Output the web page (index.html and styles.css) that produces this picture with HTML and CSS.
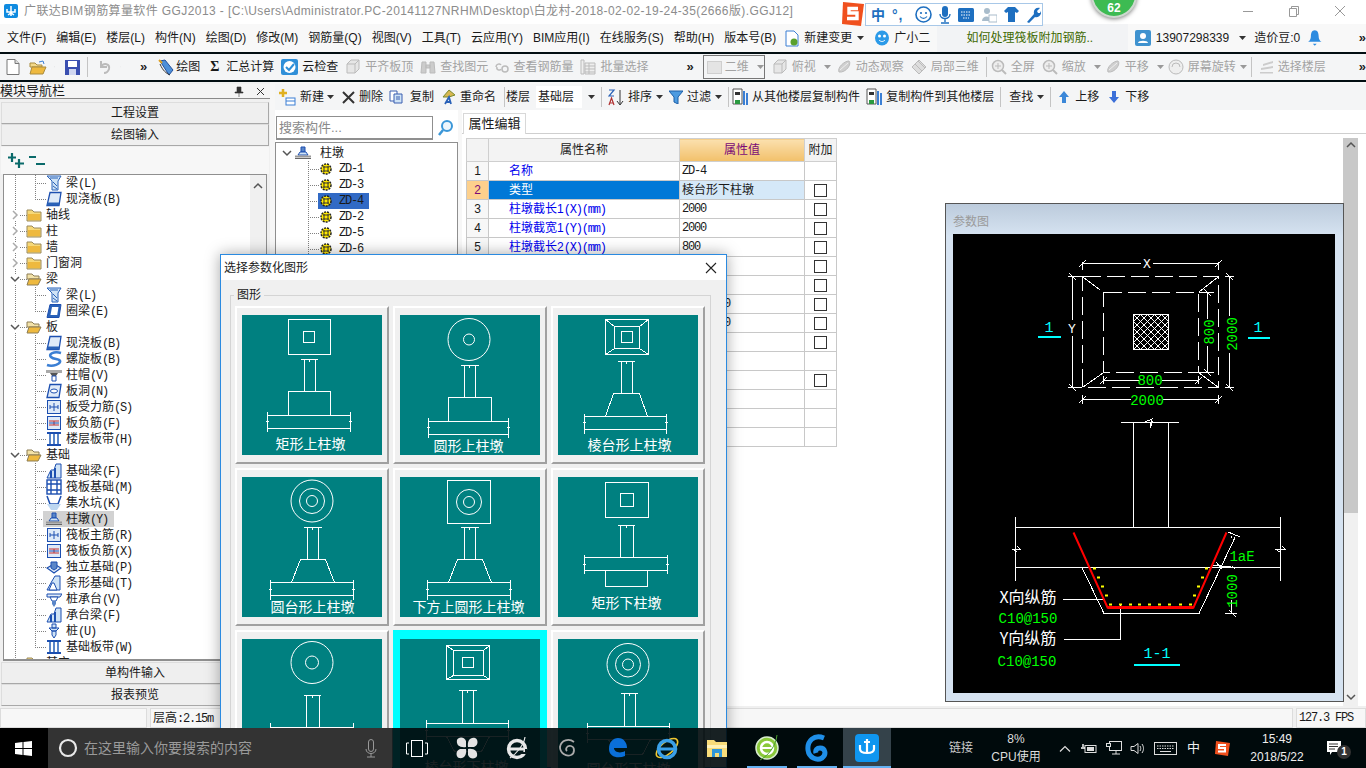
FILE: index.html
```html
<!DOCTYPE html>
<html lang="zh">
<head>
<meta charset="utf-8">
<title>广联达BIM钢筋算量软件 GGJ2013</title>
<link rel="stylesheet" href="styles.css">
</head>
<body>
<svg class="defs" width="0" height="0">
  <defs>
    <symbol id="fc" viewBox="0 0 16 14"><path d="M1 2h5l2 2h7v9H1z" fill="#f6d878" stroke="#9b8a5c"/><path d="M2 6h12v6H2z" fill="#eeb93f"/></symbol>
    <symbol id="fo" viewBox="0 0 16 14"><path d="M1 2h5l2 2h5v3H1z" fill="#f3e2a8" stroke="#8c7d55"/><path d="M3 7h12l-3 6H1z" fill="#eeb93f" stroke="#8c7d55"/></symbol>
    <symbol id="beam" viewBox="0 0 16 16"><path d="M1 1h14l-3 5v9H6V6z" fill="#cfe3f6" stroke="#2a62b8"/><path d="M4 3h8M7 7l4 4M7 11l4 3" stroke="#2a62b8"/></symbol>
    <symbol id="slab" viewBox="0 0 16 16"><path d="M4 1.500h11l-2 13H1z" fill="#dfeaf8" stroke="#1c4fb0" stroke-width="1.300"/><path d="M1 14.500h12l.6-3H1.500z" fill="#2a62b8"/></symbol>
    <symbol id="ring" viewBox="0 0 16 16"><path d="M4 1.500h11l-2 13H1z" fill="#2a62b8" stroke="#1c4fb0"/><path d="M6 4h6.500l-1.300 8H4.500z" fill="#fff"/></symbol>
    <symbol id="spiral" viewBox="0 0 16 16"><path d="M15 2C8 0 2 3 5 6c3 3 8 1 9 4 1 3-7 6-13 4" fill="none" stroke="#3b7fd4" stroke-width="2.600"/></symbol>
    <symbol id="cap" viewBox="0 0 16 16"><path d="M0 3h16v3H0z" fill="#a9a9a9"/><path d="M4 6h8l-2 3H6z" fill="#555"/><path d="M6 9h4v5H6z" fill="#fff" stroke="#1c4fb0"/></symbol>
    <symbol id="hole" viewBox="0 0 16 16"><path d="M4 1.500h11l-2 13H1z" fill="#dfeaf8" stroke="#1c4fb0" stroke-width="1.300"/><ellipse cx="8" cy="8" rx="3.500" ry="2" fill="#fff" stroke="#1c4fb0"/></symbol>
    <symbol id="gridm" viewBox="0 0 16 16"><rect x="1.500" y="1.500" width="13" height="13" fill="#dfeaf8" stroke="#1c4fb0"/><path d="M8 4v8M4 8h8M4 6v4M12 6v4" stroke="#1c4fb0" fill="none"/></symbol>
    <symbol id="gridn" viewBox="0 0 16 16"><rect x="1.500" y="1.500" width="13" height="13" fill="#dfeaf8" stroke="#1c4fb0"/><path d="M3 6h10M3 10h10M8 6v4" stroke="#c03030" fill="none"/><path d="M3 8h10" stroke="#1c4fb0"/></symbol>
    <symbol id="band" viewBox="0 0 16 16"><path d="M1 2h14M1 14h14" stroke="#1c4fb0" stroke-width="2"/><path d="M4 3v10M8 3v10M12 3v10" stroke="#5a86c8" stroke-width="2"/></symbol>
    <symbol id="fb" viewBox="0 0 16 16"><path d="M1 15l4-8h3l2-6h5v14z" fill="#cfe3f6" stroke="#1c4fb0"/><path d="M5 8v7M9 5v10" stroke="#1c4fb0" stroke-width="2"/></symbol>
    <symbol id="raft" viewBox="0 0 16 16"><rect x="1" y="1" width="14" height="14" fill="#fff" stroke="#1c4fb0" stroke-width="1.400"/><path d="M5 1v14M11 1v14M1 5h14M1 11h14" stroke="#1c4fb0" stroke-width="1.400"/></symbol>
    <symbol id="pit" viewBox="0 0 16 16"><path d="M1 1l3 8h8l3-8" fill="none" stroke="#1c4fb0" stroke-width="1.500"/><path d="M1 9l4 6h6l4-6z" fill="#bcd6f0"/></symbol>
    <symbol id="pier" viewBox="0 0 16 16"><path d="M6 2h4v5H6z" fill="#5a86c8" stroke="#1c4fb0"/><path d="M3 10l2-3h6l2 3z" fill="#cfe3f6" stroke="#1c4fb0"/><path d="M0 10.500h16v2H0z" fill="#999"/><path d="M0 13.500h16" stroke="#666"/></symbol>
    <symbol id="iso" viewBox="0 0 16 16"><path d="M1 9l7-4 7 4-7 5z" fill="#dfeaf8" stroke="#1c4fb0" stroke-width="1.200"/><path d="M5 3h6v6l-3 2-3-2z" fill="#5a86c8" stroke="#1c4fb0"/></symbol>
    <symbol id="strip" viewBox="0 0 16 16"><path d="M1 15l5-9 3-5h5v14z" fill="#cfe3f6" stroke="#1c4fb0"/><path d="M3 15l3-7h2l3 7z" fill="#fff" stroke="#1c4fb0"/></symbol>
    <symbol id="ptc" viewBox="0 0 16 16"><path d="M1 3h15l-2 3H1z" fill="#dfeaf8" stroke="#1c4fb0"/><path d="M4 6h8l-2 4H6z" fill="#fff" stroke="#1c4fb0"/><path d="M6 10h4v3l-2 3-2-3z" fill="#5a86c8"/></symbol>
    <symbol id="pile" viewBox="0 0 16 16"><path d="M6 1h4v4H6zM3 5h10l-3 3H6zM6 8h4v4l-2 3-2-3z" fill="#cfe3f6" stroke="#1c4fb0"/></symbol>
    <symbol id="zd" viewBox="0 0 14 14"><circle cx="7" cy="7" r="5" fill="#ffe800" stroke="#222" stroke-width="1.500" stroke-dasharray="2 1"/><path d="M4 5h6M4 9h6M5 4v6M9 4v6" stroke="#333"/></symbol>
    <symbol id="dd" viewBox="0 0 7 4"><path d="M0 0h7L3.500 4z" fill="#333"/></symbol>
    <symbol id="ddg" viewBox="0 0 7 4"><path d="M0 0h7L3.500 4z" fill="#999"/></symbol>
    <symbol id="cr" viewBox="0 0 10 10"><path d="M3 1l4 4-4 4" fill="none" stroke="#aaa" stroke-width="1.500"/></symbol>
    <symbol id="cd" viewBox="0 0 10 10"><path d="M1 3l4 4 4-4" fill="none" stroke="#555" stroke-width="1.500"/></symbol>
    <symbol id="cu" viewBox="0 0 10 10"><path d="M1 7l4-4 4 4" fill="none" stroke="#555" stroke-width="1.500"/></symbol>
    <symbol id="gcube" viewBox="0 0 16 16"><path d="M2 5l4-4h8v9l-4 4H2z" fill="#e6e6e6" stroke="#bbb"/><path d="M2 5h8v9M10 5l4-4" fill="none" stroke="#bbb"/></symbol>
    <symbol id="gblob" viewBox="0 0 16 16"><path d="M3 13C1 9 8 2 13 2c3 3-3 12-10 11z" fill="#cfcfcf" stroke="#bbb"/><path d="M4 11L12 4" stroke="#eee"/></symbol>
    <symbol id="gdia" viewBox="0 0 16 16"><path d="M8 1l7 7-7 7-7-7z" fill="#ddd" stroke="#bbb"/><path d="M4 5l7 7M7 2l7 7" stroke="#bbb"/></symbol>
    <symbol id="gmag" viewBox="0 0 16 16"><circle cx="7" cy="7" r="5.500" fill="#eee" stroke="#bbb" stroke-width="1.500"/><path d="M11 11l4 4" stroke="#bbb" stroke-width="2"/><path d="M4 7h6M7 4v6" stroke="#bbb"/></symbol>
    <symbol id="copy1" viewBox="0 0 16 18"><path d="M1 1h9v15H1z" fill="#fff" stroke="#555"/><path d="M3 4h5v3H3z" fill="#333"/><path d="M11 3h2v14h-2zM14 5h2v12h-2z" fill="#3b7fd4"/><path d="M3 12h5v4H3z" fill="#2a9a40"/></symbol>
  </defs>
</svg>

<div class="app">
  <header class="titlebar">
    <svg class="appicon" width="14" height="14" viewBox="0 0 14 14"><rect width="14" height="14" rx="2" fill="#0f8be0"/><path d="M7 2v10M3 5v3h8V5M4 11l3-2 3 2" fill="none" stroke="#fff" stroke-width="1.500"/></svg>
    <span class="apptitle">广联达BIM钢筋算量软件 GGJ2013 - [C:\Users\Administrator.PC-20141127NRHM\Desktop\白龙村-2018-02-02-19-24-35(2666版).GGJ12]</span>
    <div class="winbtns">
      <svg width="12" height="12" viewBox="0 0 12 12"><path d="M1 6.500h10" stroke="#999"/></svg>
      <svg width="12" height="12" viewBox="0 0 12 12"><path d="M1.500 3.500h7v8h-7zM3.500 3.500v-2h7v8h-2" fill="none" stroke="#999"/></svg>
      <svg width="12" height="12" viewBox="0 0 12 12"><path d="M1 1l10 10M11 1L1 11" stroke="#999"/></svg>
    </div>
  </header>

  <nav class="menubar">
    <span>文件(F)</span><span>编辑(E)</span><span>楼层(L)</span><span>构件(N)</span><span>绘图(D)</span><span>修改(M)</span><span>钢筋量(Q)</span><span>视图(V)</span><span>工具(T)</span><span>云应用(Y)</span><span>BIM应用(I)</span><span>在线服务(S)</span><span>帮助(H)</span><span>版本号(B)</span>
    <span class="tool m-change"><svg width="14" height="17" viewBox="0 0 14 17"><path d="M1 1h8l4 4v11H1z" fill="#fff" stroke="#3b7fd4"/><circle cx="9" cy="12" r="3.500" fill="#5aa02c"/></svg>新建变更<svg class="dd" width="7" height="4"><use href="#dd"/></svg></span>
    <span class="tool"><svg width="16" height="16" viewBox="0 0 16 16"><ellipse cx="8" cy="8" rx="7" ry="7.500" fill="#2b9ae8"/><circle cx="5.500" cy="6" r="1.500" fill="#fff"/><circle cx="10.500" cy="6" r="1.500" fill="#fff"/><path d="M5 10c2 2 4 2 6 0" stroke="#fff" fill="none"/></svg>广小二</span>
    <span class="tip">如何处理筏板附加钢筋..</span>
    <span class="tool m-user"><svg width="16" height="16" viewBox="0 0 16 16"><rect width="16" height="16" rx="2" fill="#3f92cf"/><circle cx="8" cy="6" r="3" fill="#fff"/><path d="M3 13c0-3 10-3 10 0z" fill="#fff"/></svg>13907298339<svg class="dd" width="7" height="4"><use href="#dd"/></svg></span>
    <span class="m-bean">造价豆:0</span>
    <svg class="bell" width="14" height="18" viewBox="0 0 14 18"><path d="M7 1c3 0 4 3 4 6s1 5 3 6H0c2-1 3-3 3-6s1-6 4-6z" fill="#2c8be0"/><path d="M5 15h4l-2 2z" fill="#2c8be0"/></svg>
    <span class="more">»</span>
  </nav>

  <div class="toolbar1">
    <span class="tbicon"><svg width="14" height="16" viewBox="0 0 14 16"><path d="M1 .5h8l4 4v11H1z" fill="#fff" stroke="#777"/><path d="M9 .5v4h4" fill="#ddd" stroke="#777"/></svg></span>
    <span class="tbicon open"><svg width="18" height="15" viewBox="0 0 18 15"><path d="M1 3h5l2 2h5v2H1z" fill="#f3d98a" stroke="#a98b3f"/><path d="M3 7h14l-3 7H1z" fill="#eeb93f" stroke="#a98b3f"/><path d="M10 2l4-1 1 3" fill="none" stroke="#3b7fd4"/></svg></span>
    <svg class="dd" width="7" height="4"><use href="#dd"/></svg>
    <span class="tbicon save"><svg width="15" height="15" viewBox="0 0 15 15"><rect width="15" height="15" fill="#3a4fb0"/><rect x="3" y="1" width="9" height="6" fill="#fff"/><rect x="4" y="9" width="7" height="6" fill="#cfd6f0"/></svg></span>
    <span class="sep s-a"></span>
    <span class="tbicon undo"><svg width="14" height="14" viewBox="0 0 14 14"><path d="M4 1v6h6M4 7c3-5 9-3 8 2-1 3-3 4-5 4" fill="none" stroke="#bbb" stroke-width="2"/></svg></span>
    <svg class="dd dd-u" width="7" height="4"><use href="#ddg"/></svg>
    <span class="more more-a">»</span>

    <span class="tool t-draw"><svg width="16" height="17" viewBox="0 0 16 17"><path d="M2 2l5-1 8 10-4 5z" fill="#4d8fd8" stroke="#234f9a"/><path d="M2 5c3 7 6 9 10 11" fill="none" stroke="#333"/><path d="M1 1l3 3" stroke="#e0a020" stroke-width="2"/></svg>绘图</span>
    <span class="tool t-sum"><b class="sigma">Σ</b>汇总计算</span>
    <span class="tool"><svg width="17" height="16" viewBox="0 0 17 16"><rect width="17" height="16" rx="2" fill="#2f8fd8"/><circle cx="8.500" cy="8" r="6" fill="#fff"/><path d="M5 8l3 3 5-6" fill="none" stroke="#2f8fd8" stroke-width="2"/></svg>云检查</span>
    <span class="tool off"><svg width="16" height="16"><use href="#gcube"/></svg>平齐板顶</span>
    <span class="tool off"><svg width="16" height="16" viewBox="0 0 16 16"><path d="M2 3h4v11H1zM10 3h4l1 11h-5zM6 6h4v3H6z" fill="#ccc" stroke="#bbb"/></svg>查找图元</span>
    <span class="tool off"><svg width="14" height="12" viewBox="0 0 14 12"><circle cx="10" cy="8" r="3" fill="none" stroke="#bbb" stroke-width="1.500"/><path d="M1 6c0-3 4-4 5-2M2 6c-1 3 3 4 4 2" fill="none" stroke="#bbb" stroke-width="1.500"/></svg>查看钢筋量</span>
    <span class="tool off"><svg width="16" height="16" viewBox="0 0 16 16"><path d="M1 1h3v14H1zM5 4h10v11H5z" fill="#eee" stroke="#bbb"/><path d="M5 7h10M5 10h10M5 13h10M9 4v11" stroke="#bbb"/></svg>批量选择</span>
    <span class="more more-b">»</span>

    <span class="combo2d off"><i class="box2d"></i>二维<svg class="dd" width="7" height="4"><use href="#ddg"/></svg></span>
    <span class="tool off"><svg width="16" height="16"><use href="#gcube"/></svg>俯视<svg class="dd dd-t" width="7" height="4"><use href="#ddg"/></svg></span>
    <span class="tool off n2"><svg width="16" height="16"><use href="#gblob"/></svg>动态观察</span>
    <span class="tool off"><svg width="16" height="16"><use href="#gdia"/></svg>局部三维</span>
    <span class="sep"></span>
    <span class="tool off n3"><svg width="16" height="16"><use href="#gmag"/></svg>全屏</span>
    <span class="tool off"><svg width="16" height="16"><use href="#gmag"/></svg>缩放<svg class="dd dd-t" width="7" height="4"><use href="#ddg"/></svg></span>
    <span class="tool off n3"><svg width="16" height="16"><use href="#gblob"/></svg>平移<svg class="dd dd-t" width="7" height="4"><use href="#ddg"/></svg></span>
    <span class="tool off n3"><svg width="16" height="16" viewBox="0 0 16 16"><circle cx="8" cy="8" r="7" fill="#eee" stroke="#bbb"/><path d="M4 8a4 4 0 018 0" fill="none" stroke="#bbb"/></svg>屏幕旋转<svg class="dd" width="7" height="4"><use href="#ddg"/></svg></span>
    <span class="sep n3"></span>
    <span class="tool off"><svg width="15" height="14" viewBox="0 0 15 14"><path d="M4 4l10-3v2L4 6zM2 8l12-2v2L2 10zM1 12h13v1.500H1z" fill="#ccc"/></svg>选择楼层</span>
    <span class="more more-c">»</span>
  </div>

  <main class="work">
    <aside class="nav">
      <div class="navhead"><span>模块导航栏</span><span class="navctl"><svg width="10" height="11" viewBox="0 0 10 11"><path d="M3 1h4v5h2v1H1V6h2zM5 7v4" fill="#333" stroke="#333" stroke-width=".6"/></svg><svg width="9" height="9" viewBox="0 0 9 9"><path d="M1 1l7 7M8 1L1 8" stroke="#333"/></svg></span></div>
      <div class="navbtn">工程设置</div>
      <div class="navbtn">绘图输入</div>
      <div class="navtools">
        <svg width="17" height="17" viewBox="0 0 17 17"><path d="M5 1v9M1 5.500h8M12 7v9M8 11.500h9" stroke="#0a6a6a" stroke-width="2.200"/></svg>
        <svg width="17" height="13" viewBox="0 0 17 13"><path d="M1 3h7M8 10h9" stroke="#0a6a6a" stroke-width="2"/></svg>
      </div>
      <div class="tree">
        <div class="treerows">
          <div class="tr kid"><svg width="16" height="16"><use href="#beam"/></svg><span>梁<span class="lat">(L)</span></span></div>
          <div class="tr kid last"><svg width="16" height="16"><use href="#slab"/></svg><span>现浇板<span class="lat">(B)</span></span></div>
          <div class="tr folder"><svg class="chev" width="10" height="10"><use href="#cr"/></svg><svg width="16" height="14"><use href="#fc"/></svg><span>轴线</span></div>
          <div class="tr folder"><svg class="chev" width="10" height="10"><use href="#cr"/></svg><svg width="16" height="14"><use href="#fc"/></svg><span>柱</span></div>
          <div class="tr folder"><svg class="chev" width="10" height="10"><use href="#cr"/></svg><svg width="16" height="14"><use href="#fc"/></svg><span>墙</span></div>
          <div class="tr folder"><svg class="chev" width="10" height="10"><use href="#cr"/></svg><svg width="16" height="14"><use href="#fc"/></svg><span>门窗洞</span></div>
          <div class="tr folder"><svg class="chev" width="10" height="10"><use href="#cd"/></svg><svg width="16" height="14"><use href="#fo"/></svg><span>梁</span></div>
          <div class="tr kid"><svg width="16" height="16"><use href="#beam"/></svg><span>梁<span class="lat">(L)</span></span></div>
          <div class="tr kid last"><svg width="16" height="16"><use href="#ring"/></svg><span>圈梁<span class="lat">(E)</span></span></div>
          <div class="tr folder"><svg class="chev" width="10" height="10"><use href="#cd"/></svg><svg width="16" height="14"><use href="#fo"/></svg><span>板</span></div>
          <div class="tr kid"><svg width="16" height="16"><use href="#slab"/></svg><span>现浇板<span class="lat">(B)</span></span></div>
          <div class="tr kid"><svg width="16" height="16"><use href="#spiral"/></svg><span>螺旋板<span class="lat">(B)</span></span></div>
          <div class="tr kid"><svg width="16" height="16"><use href="#cap"/></svg><span>柱帽<span class="lat">(V)</span></span></div>
          <div class="tr kid"><svg width="16" height="16"><use href="#hole"/></svg><span>板洞<span class="lat">(N)</span></span></div>
          <div class="tr kid"><svg width="16" height="16"><use href="#gridm"/></svg><span>板受力筋<span class="lat">(S)</span></span></div>
          <div class="tr kid"><svg width="16" height="16"><use href="#gridn"/></svg><span>板负筋<span class="lat">(F)</span></span></div>
          <div class="tr kid last"><svg width="16" height="16"><use href="#band"/></svg><span>楼层板带<span class="lat">(H)</span></span></div>
          <div class="tr folder"><svg class="chev" width="10" height="10"><use href="#cd"/></svg><svg width="16" height="14"><use href="#fo"/></svg><span>基础</span></div>
          <div class="tr kid"><svg width="16" height="16"><use href="#fb"/></svg><span>基础梁<span class="lat">(F)</span></span></div>
          <div class="tr kid"><svg width="16" height="16"><use href="#raft"/></svg><span>筏板基础<span class="lat">(M)</span></span></div>
          <div class="tr kid"><svg width="16" height="16"><use href="#pit"/></svg><span>集水坑<span class="lat">(K)</span></span></div>
          <div class="tr kid"><span class="sel"><svg width="16" height="16"><use href="#pier"/></svg><span>柱墩<span class="lat">(Y)</span></span></span></div>
          <div class="tr kid"><svg width="16" height="16"><use href="#gridm"/></svg><span>筏板主筋<span class="lat">(R)</span></span></div>
          <div class="tr kid"><svg width="16" height="16"><use href="#gridn"/></svg><span>筏板负筋<span class="lat">(X)</span></span></div>
          <div class="tr kid"><svg width="16" height="16"><use href="#iso"/></svg><span>独立基础<span class="lat">(P)</span></span></div>
          <div class="tr kid"><svg width="16" height="16"><use href="#strip"/></svg><span>条形基础<span class="lat">(T)</span></span></div>
          <div class="tr kid"><svg width="16" height="16"><use href="#ptc"/></svg><span>桩承台<span class="lat">(V)</span></span></div>
          <div class="tr kid"><svg width="16" height="16"><use href="#fb"/></svg><span>承台梁<span class="lat">(F)</span></span></div>
          <div class="tr kid"><svg width="16" height="16"><use href="#pile"/></svg><span>桩<span class="lat">(U)</span></span></div>
          <div class="tr kid last"><svg width="16" height="16"><use href="#band"/></svg><span>基础板带<span class="lat">(W)</span></span></div>
          <div class="tr folder"><svg class="chev" width="10" height="10"><use href="#cr"/></svg><svg width="16" height="14"><use href="#fc"/></svg><span>其它</span></div>
        </div>
        <div class="treebar"><svg width="10" height="10"><use href="#cu"/></svg></div>
      </div>
      <div class="navbtn">单构件输入</div>
      <div class="navbtn">报表预览</div>
    </aside>

    <section class="content">
      <div class="toolbar2">
        <span class="tool t-new"><svg width="17" height="17" viewBox="0 0 17 17"><path d="M4 0v8M0 4h8" stroke="#e0b020" stroke-width="2.500"/><rect x="7" y="9" width="9" height="7" fill="#fff" stroke="#3b7fd4"/><path d="M7 12h9" stroke="#3b7fd4"/></svg>新建<svg class="dd" width="7" height="4"><use href="#dd"/></svg></span>
        <span class="tool t-del"><svg width="13" height="13" viewBox="0 0 13 13"><path d="M1 1l11 11M12 1L1 12" stroke="#333" stroke-width="2"/></svg>删除</span>
        <span class="tool t-copy"><svg width="14" height="14" viewBox="0 0 14 14"><path d="M1 1h7v10H1z" fill="#fff" stroke="#3b5fb0"/><path d="M5 4h8v9H5z" fill="#cfe3f6" stroke="#3b5fb0"/><path d="M7 7h4M7 9h4" stroke="#3b5fb0"/></svg>复制</span>
        <span class="tool"><svg width="16" height="16" viewBox="0 0 16 16"><path d="M3 8l6-7 6 5-6 2z" fill="#d8b850" stroke="#7a8a30"/><path d="M5 15l4-7 2 7M6 13h4" fill="none" stroke="#2a62b8" stroke-width="1.800"/></svg>重命名</span>
        <span class="sep s-floor"></span>
        <span class="l-floor">楼层</span>
        <span class="floorbox">基础层</span>
        <svg class="dd" width="7" height="4"><use href="#dd"/></svg>
        <span class="sep"></span>
        <span class="tool"><svg width="16" height="17" viewBox="0 0 16 17"><path d="M1 1h5L1 7h5" fill="none" stroke="#2a62b8" stroke-width="1.200"/><path d="M1 16l2.500-7L6 16M2 14h3" fill="none" stroke="#b03030" stroke-width="1.200"/><path d="M12 1v14M9 12l3 4 3-4" fill="none" stroke="#333"/></svg>排序<svg class="dd" width="7" height="4"><use href="#dd"/></svg></span>
        <span class="tool"><svg width="14" height="14" viewBox="0 0 14 14"><path d="M0 1h14L9 7v7L5 12V7z" fill="#4d9be0" stroke="#1c5fa8"/></svg>过滤<svg class="dd" width="7" height="4"><use href="#dd"/></svg></span>
        <span class="sep"></span>
        <span class="tool t-cp1"><svg width="16" height="18"><use href="#copy1"/></svg>从其他楼层复制构件</span>
        <span class="tool t-cp2"><svg width="16" height="18"><use href="#copy1"/></svg>复制构件到其他楼层</span>
        <span class="sep"></span>
        <span class="tool t-find">查找<svg class="dd" width="7" height="4"><use href="#dd"/></svg></span>
        <span class="sep"></span>
        <span class="tool t-move"><svg width="10" height="12" viewBox="0 0 10 12"><path d="M5 0l5 6H7v6H3V6H0z" fill="#3b87d8"/></svg>上移</span>
        <span class="tool t-move"><svg width="10" height="12" viewBox="0 0 10 12"><path d="M5 12l5-6H7V0H3v6H0z" fill="#3b6fd8"/></svg>下移</span>
      </div>

      <div class="panes">
        <div class="comp">
          <div class="searchrow">
            <div class="search">搜索构件...</div>
            <svg width="18" height="18" viewBox="0 0 18 18"><circle cx="10" cy="7" r="5" fill="#eef6fc" stroke="#3b97d8" stroke-width="2"/><path d="M6 11l-4 5" stroke="#3b97d8" stroke-width="2.500"/></svg>
          </div>
          <div class="comptree">
            <div class="cr croot"><svg class="chev" width="10" height="10"><use href="#cd"/></svg><svg width="16" height="16"><use href="#pier"/></svg><span>柱墩</span></div>
            <div class="cr"><svg width="14" height="14"><use href="#zd"/></svg><span class="lat">ZD-1</span></div>
            <div class="cr"><svg width="14" height="14"><use href="#zd"/></svg><span class="lat">ZD-3</span></div>
            <div class="cr"><span class="csel"><svg width="14" height="14"><use href="#zd"/></svg><span class="lat">ZD-4</span></span></div>
            <div class="cr"><svg width="14" height="14"><use href="#zd"/></svg><span class="lat">ZD-2</span></div>
            <div class="cr"><svg width="14" height="14"><use href="#zd"/></svg><span class="lat">ZD-5</span></div>
            <div class="cr"><svg width="14" height="14"><use href="#zd"/></svg><span class="lat">ZD-6</span></div>
          </div>
        </div>

        <div class="props">
          <div class="tabs"><span class="tab">属性编辑</span></div>
          <div class="propbody">
            <table class="ptable">
              <thead><tr><th class="c-n"></th><th class="c-name">属性名称</th><th class="c-val">属性值</th><th class="c-add">附加</th></tr></thead>
              <tbody>
                <tr><td class="n">1</td><td class="nm">名称</td><td class="lat">ZD-4</td><td></td></tr>
                <tr class="cur"><td class="n">2</td><td class="nm">类型</td><td>棱台形下柱墩</td><td><i class="cb"></i></td></tr>
                <tr><td class="n">3</td><td class="nm">柱墩截长1<span class="lat">(X)(mm)</span></td><td class="lat">2000</td><td><i class="cb"></i></td></tr>
                <tr><td class="n">4</td><td class="nm">柱墩截宽1<span class="lat">(Y)(mm)</span></td><td class="lat">2000</td><td><i class="cb"></i></td></tr>
                <tr><td class="n">5</td><td class="nm">柱墩截长2<span class="lat">(X)(mm)</span></td><td class="lat">800</td><td><i class="cb"></i></td></tr>
                <tr><td class="n">6</td><td class="nm">柱墩截宽2<span class="lat">(Y)(mm)</span></td><td class="lat">800</td><td><i class="cb"></i></td></tr>
                <tr><td class="n">7</td><td class="nm">柱墩高<span class="lat">(H)(mm)</span></td><td class="lat">1000</td><td><i class="cb"></i></td></tr>
                <tr><td class="n">8</td><td class="nm">X向纵筋</td><td class="lat">C10@1500</td><td><i class="cb"></i></td></tr>
                <tr><td class="n">9</td><td class="nm">Y向纵筋</td><td class="lat">C10@1500</td><td><i class="cb"></i></td></tr>
                <tr><td class="n">10</td><td class="nm">备注</td><td></td><td><i class="cb"></i></td></tr>
                <tr><td class="n">11</td><td></td><td></td><td></td></tr>
                <tr><td class="n">12</td><td></td><td></td><td><i class="cb"></i></td></tr>
                <tr><td class="n">13</td><td></td><td></td><td></td></tr>
                <tr><td class="n">14</td><td></td><td></td><td></td></tr>
                <tr><td class="n">15</td><td></td><td></td><td></td></tr>
              </tbody>
            </table>
            <div class="vbar"><svg width="10" height="10"><use href="#cu"/></svg><svg width="10" height="10"><use href="#cd"/></svg></div>
          </div>
        </div>
      </div>
    </section>
  </main>

  <footer class="status">
    <span class="st st-a"></span>
    <span class="st st-b">层高<span class="lat">:2.15m</span></span>
    <span class="st st-c"></span>
    <span class="st st-d lat">127.3 FPS</span>
  </footer>

  <!-- floating parameter window -->
  <div class="paramwin">
    <div class="paramtitle">参数图</div>
    <svg class="paramsvg" width="382" height="459" viewBox="953 234 382 459">
      <g class="w">
        <rect x="1082.500" y="276.500" width="136" height="111" stroke-dasharray="18 6"/>
        <rect x="1103.500" y="292.500" width="95" height="80" stroke-dasharray="18 6"/>
        <rect x="1133.500" y="314.500" width="35" height="35"/>
        <path d="M1083 277l17 13M1218 277l-19 15M1083 387l20-14M1218 387l-19-14"/>
        <path d="M1082.500 262v8M1218.500 262v8M1082.500 263.500h58M1153 263.500h65.500M1079 267l7-7M1215 267l7-7"/>
        <path d="M1072.500 276.500v43M1072.500 336v51.500M1068 276.500h14M1068 387.500h14M1069 273l7 7M1069 384l7 7"/>
        <path d="M1207.500 292.500v26M1207.500 346v26.500M1199 292.500h15M1199 372.500h15M1204 289l7 7M1204 369l7 7"/>
        <path d="M1229.500 276.500v39M1229.500 353v34.500M1225 276.500h9M1225 387.500h9M1226 273l7 7M1226 384l7 7"/>
        <path d="M1103.500 380.500h35M1162 380.500h36.500M1103.500 376v8M1198.500 376v8M1100 384l7-7M1195 384l7-7"/>
        <path d="M1082.500 399.500h48M1163 399.500h55.500M1082.500 395v9M1218.500 395v9M1079 403l7-7M1215 403l7-7"/>
        <path d="M1120.500 422.500h58M1133.500 422.500v105M1168.500 422.500v105M1145 422l7-3-2 9 3-7"/>
        <path d="M1015.500 527.500h265M1015.500 567.500h265M1015.500 517v64M1280.500 517v64"/>
        <path d="M1012 549h8l-3-3M1012 549l5 3M1275 549h10l-3-3M1275 549l5 3"/>
        <path d="M1082 567.500l22 46h95l36-76"/>
        <path d="M1063 599.500h42M1064 639.500h56.500v-35"/>
        <path d="M1228 532l12 5M1232 536l-1 2M1211 565l20 2M1216 562l6 7M1232 566l3 3M1225 613l12 0M1229 610l7 7M1231 600v13"/>
      </g>
      <path class="hatch" d="M1133.500 321.500L1140.500 314.500M1133.500 328.500L1147.500 314.500M1133.500 335.500L1154.500 314.500M1133.500 342.500L1161.500 314.500M1133.500 349.500L1168.500 314.500M1140.500 349.500L1168.500 321.500M1147.500 349.500L1168.500 328.500M1154.500 349.500L1168.500 335.500M1161.500 349.500L1168.500 342.500M1161.500 314.500L1168.500 321.500M1154.500 314.500L1168.500 328.500M1147.500 314.500L1168.500 335.500M1140.500 314.500L1168.500 342.500M1133.500 314.500L1168.500 349.500M1133.500 321.500L1161.500 349.500M1133.500 328.500L1154.500 349.500M1133.500 335.500L1147.500 349.500M1133.500 342.500L1140.500 349.500"/>
      <path class="red" d="M1073.500 532.500l34 75h86l33-75" />
      <path class="redb" d="M1107.500 607.500h86"/>
      <g class="dots">
        <path d="M1093 568.500h3M1097 577.500h3M1101 586.500h3M1105 595.500h3M1109 604.500h3M1119 604.500h3M1129 604.500h3M1138 604.500h3M1148 604.500h3M1158 604.500h3M1168 604.500h3M1179 604.500h3M1189 604.500h3M1193 595.500h3M1197 586.500h3M1201 577.500h3M1205 568.500h3"/>
      </g>
      <g class="cy">
        <path d="M1038 337h23M1248 338h22M1134 665h46"/>
      </g>
      <text class="txt cyt" x="1049" y="332">1</text>
      <text class="txt cyt" x="1258" y="332">1</text>
      <text class="txt cyt" x="1157" y="658">1-1</text>
      <text class="txt wt" x="1147" y="268">X</text>
      <text class="txt wt" x="1072" y="333">Y</text>
      <text class="txt gr" x="1150" y="385">800</text>
      <text class="txt gr" x="1147" y="405">2000</text>
      <text class="txt gr" transform="translate(1214 332) rotate(-90)">800</text>
      <text class="txt gr" transform="translate(1237 334) rotate(-90)">2000</text>
      <text class="txt gr" transform="translate(1237 591) rotate(-90)">1000</text>
      <text class="txt gr" x="1242" y="561">1aE</text>
      <text class="cjk" x="1028" y="603">X向纵筋</text>
      <text class="cjk" x="1028" y="644">Y向纵筋</text>
      <text class="txt gr" x="1028" y="623">C10@150</text>
      <text class="txt gr" x="1027" y="666">C10@150</text>
    </svg>
  </div>

  <!-- modal dialog -->
  <div class="dialog">
    <div class="dlgtitle"><span>选择参数化图形</span><svg width="12" height="12" viewBox="0 0 12 12"><path d="M1 1l10 10M11 1L1 11" stroke="#222" stroke-width="1.100"/></svg></div>
    <div class="dlgbody">
      <div class="group">
        <span class="legend">图形</span>
        <div class="tiles">
          <div class="tile"><svg class="pic" width="140" height="140" viewBox="0 0 140 140">
            <rect x="46.500" y="4.500" width="42" height="35"/><rect x="61.500" y="16.500" width="11" height="11"/>
            <path d="M58.500 44.500h17M62.500 44.500v32M73.500 44.500v32M67.500 44v3"/><rect x="46.500" y="76.500" width="42" height="24"/>
            <path d="M25.500 100.500h83M25.500 113.500h83M25.500 97v20M108.500 97v20M24 106.500h3M107 106.500h3"/>
            <text x="68.500" y="128">矩形上柱墩</text></svg></div>
          <div class="tile"><svg class="pic" width="140" height="140" viewBox="0 0 140 140">
            <circle cx="69" cy="24.500" r="21"/><circle cx="69" cy="24.500" r="5.500"/>
            <path d="M60.500 50.500h18M64.500 50.500v32M75.500 50.500v32M69.500 50v3"/><rect x="48.500" y="82.500" width="43" height="24"/>
            <path d="M28.500 106.500h80M28.500 119.500h80M28.500 103v20M108.500 103v20M27 112.500h3M107 112.500h3"/>
            <text x="68.500" y="130">圆形上柱墩</text></svg></div>
          <div class="tile"><svg class="pic" width="140" height="140" viewBox="0 0 140 140">
            <rect x="47.500" y="4.500" width="43" height="35"/><rect x="56.500" y="11.500" width="25" height="22"/><rect x="63.500" y="16.500" width="11" height="11"/>
            <path d="M47.500 4.500l9 7M90.500 4.500l-9 7M47.500 39.500l9-6M90.500 39.500l-9-6"/>
            <path d="M59.500 46.500h17M63.500 46.500v32M74.500 46.500v32M68.500 46v3M55.500 78.500h26l8 23M55.500 78.500l-8 23"/>
            <path d="M26.500 101.500h82M26.500 114.500h82M26.500 99v20M108.500 99v20M25 107.500h3M107 107.500h3"/>
            <text x="71.500" y="129">棱台形上柱墩</text></svg></div>
          <div class="tile"><svg class="pic" width="140" height="140" viewBox="0 0 140 140">
            <circle cx="70" cy="24" r="21"/><circle cx="70" cy="24" r="12.500"/><circle cx="70" cy="24" r="5.500"/>
            <path d="M61.500 50.500h18M65.500 50.500v32M76.500 50.500v32M70.500 50v3M58.500 82.500h25l9 23M58.500 82.500l-9 23"/>
            <path d="M28.500 105.500h83M28.500 118.500h83M28.500 103v20M111.500 103v20M27 112.500h3M110 112.500h3"/>
            <text x="70.500" y="129">圆台形上柱墩</text></svg></div>
          <div class="tile"><svg class="pic" width="140" height="140" viewBox="0 0 140 140">
            <rect x="47.500" y="3.500" width="43" height="43"/><circle cx="69" cy="25" r="12.500"/><circle cx="69" cy="25" r="5.500"/>
            <path d="M60.500 50.500h18M64.500 50.500v32M75.500 50.500v32M69.500 50v3M57.500 82.500h25l9 23M57.500 82.500l-9 23"/>
            <path d="M27.500 105.500h83M27.500 118.500h83M27.500 103v20M110.500 103v20M26 112.500h3M109 112.500h3"/>
            <text x="68.500" y="129">下方上圆形上柱墩</text></svg></div>
          <div class="tile"><svg class="pic" width="140" height="140" viewBox="0 0 140 140">
            <rect x="47.500" y="5.500" width="43" height="35"/><rect x="62.500" y="16.500" width="13" height="13"/>
            <path d="M59.500 48.500h17M62.500 48.500v32M75.500 48.500v32M68.500 48v3"/>
            <path d="M26.500 80.500h83M26.500 93.500h83M26.500 78v19M109.500 78v19M25 87.500h3M108 87.500h3"/><path d="M47.500 93.500v16h42v-16"/>
            <text x="68.500" y="125">矩形下柱墩</text></svg></div>
          <div class="tile"><svg class="pic" width="140" height="140" viewBox="0 0 140 140">
            <circle cx="70" cy="23.500" r="21"/><circle cx="70" cy="23.500" r="6.500"/>
            <path d="M61.500 56.500h17M64.500 56.500v32M77.500 56.500v32M70.500 56v3"/>
            <path d="M28.500 88.500h83M28.500 101.500h83M28.500 84v20M111.500 84v20"/><path d="M48.500 101.500v17h43v-17"/>
            <text x="68.500" y="130">圆形下柱墩</text></svg></div>
          <div class="tile on"><svg class="pic" width="140" height="140" viewBox="0 0 140 140">
            <rect x="46.500" y="6.500" width="43" height="34"/><rect x="53.500" y="11.500" width="30" height="25"/><rect x="62.500" y="18.500" width="11" height="10"/>
            <path d="M46.500 6.500l7 5M89.500 6.500l-6 5M46.500 40.500l7-4M89.500 40.500l-6-4"/>
            <path d="M58.500 51.500h18M62.500 51.500v33M73.500 51.500v33M67.500 51v3"/>
            <path d="M26.500 84.500h82M26.500 97.500h82M26.500 81v20M108.500 81v20M25 91.500h3M107 91.500h3M46.500 97.500l8 15h27l8-15"/>
            <text x="66.500" y="127">棱台形下柱墩</text></svg></div>
          <div class="tile"><svg class="pic" width="140" height="140" viewBox="0 0 140 140">
            <circle cx="70" cy="25.500" r="21"/><circle cx="70" cy="25.500" r="12.500"/><circle cx="70" cy="25.500" r="5.500"/>
            <path d="M62.500 54.500h17M66.500 54.500v33M77.500 54.500v33M71.500 54v3"/>
            <path d="M29.500 87.500h82M29.500 100.500h82M29.500 84v20M111.500 84v20M28 94.500h3M110 94.500h3M50.500 100.500l8 15h26l8-15"/>
            <text x="70.500" y="129">圆台形下柱墩</text></svg></div>
        </div>
      </div>
    </div>
  </div>

  <!-- floating IME bar -->
  <div class="ime">
    <svg class="imelogo" width="25" height="26" viewBox="0 0 25 26"><path d="M3 1l21 2-3 22-19-2z" fill="#f0501e"/><path d="M18 7.500h-9v4.500h8v5.500H7" fill="none" stroke="#fff" stroke-width="3.400"/></svg>
    <div class="imebar">
      <span class="imetxt">中</span>
      <span class="imetxt imep">°,</span>
      <svg width="17" height="17" viewBox="0 0 17 17"><circle cx="8.500" cy="8.500" r="7.500" fill="#fff" stroke="#1e6fc0" stroke-width="1.600"/><circle cx="6" cy="7" r="1.100" fill="#1e6fc0"/><circle cx="11" cy="7" r="1.100" fill="#1e6fc0"/><path d="M5 10.500c2 2.500 5 2.500 7 0" fill="none" stroke="#1e6fc0" stroke-width="1.200"/></svg>
      <svg width="12" height="18" viewBox="0 0 12 18"><rect x="3" y="0" width="6" height="11" rx="3" fill="#1e6fc0"/><path d="M1 8c0 6 10 6 10 0M6 13v3M2 17h8" fill="none" stroke="#1e6fc0" stroke-width="1.400"/></svg>
      <svg width="16" height="14" viewBox="0 0 16 14"><rect width="16" height="14" rx="1.500" fill="#1e6fc0"/><path d="M3 4h10M3 7h10M5 10h6" stroke="#fff" stroke-dasharray="1.500 1"/></svg>
      <svg width="16" height="16" viewBox="0 0 16 16"><circle cx="6" cy="4" r="3" fill="#a9bccb"/><path d="M1 14c0-6 9-6 9 0z" fill="#a9bccb"/><rect x="8" y="8" width="8" height="7" fill="#fff" stroke="#a9bccb"/></svg>
      <svg width="15" height="15" viewBox="0 0 15 15"><path d="M4 0h7l4 4-2 2-2-1v10H4V5L2 6 0 4z" fill="#1e6fc0"/></svg>
      <svg width="15" height="16" viewBox="0 0 15 16"><path d="M1 15l7-8c-1-4 2-7 6-6l-3 3 1 2 2 0 1-2c1 4-3 7-6 6l-6 6z" fill="#1e6fc0"/></svg>
    </div>
  </div>
  <div class="ball"><span>62</span></div>

  <div class="taskbar">
    <div class="start"><svg width="17" height="15" viewBox="0 0 17 15"><path d="M0 2l7.500-1v6H0zM8.500 1L17 0v7H8.500zM0 8h7.500v6L0 13zM8.500 8H17v7l-8.500-1z" fill="#fff"/></svg></div>
    <div class="tsearch">
      <svg width="20" height="20" viewBox="0 0 20 20"><circle cx="10" cy="10" r="8" fill="none" stroke="#e8e8e8" stroke-width="2.200"/></svg>
      <span class="tstext">在这里输入你要搜索的内容</span>
      <svg class="tmic" width="12" height="19" viewBox="0 0 12 19"><rect x="3.500" y=".5" width="5" height="12" rx="2.500" fill="none" stroke="#999"/><path d="M1 10c0 6 10 6 10 0M6 15v3M2 18h8" fill="none" stroke="#999"/></svg>
    </div>
    <div class="tk"><svg width="22" height="17" viewBox="0 0 22 17"><rect x="5.500" y=".5" width="11" height="16" fill="none" stroke="#fff"/><path d="M3 3H.5v11H3M19 3h2.500v11H19" fill="none" stroke="#fff"/></svg></div>
    <div class="tk"><svg width="24" height="24" viewBox="0 0 24 24"><g fill="#e4e4e4"><path d="M11 11C5 12 1 9 2 4c1-3 7-4 9 1z"/><path d="M13 11C12 5 15 1 20 2c3 1 4 7-1 9z"/><path d="M13 13c6-1 10 2 9 7-1 3-7 4-9-1z"/><path d="M11 13c1 6-2 10-7 9-3-1-4-7 1-9z"/></g></svg></div>
    <div class="tk"><svg width="22" height="24" viewBox="0 0 22 24"><circle cx="11" cy="13" r="8.500" fill="none" stroke="#e8e8e8" stroke-width="3.400"/><path d="M3 13h16" stroke="#e8e8e8" stroke-width="3"/><path d="M4 22C10 18 18 9 19 1" fill="none" stroke="#e8e8e8" stroke-width="1.200"/><path d="M20 13v4h-6" fill="none" stroke="#06181a" stroke-width="2"/></svg></div>
    <div class="tk"><svg width="20" height="20" viewBox="0 0 20 20"><path d="M17 4C12 0 4 2 3 9c0 6 6 10 11 8 4-2 4-8 0-9-4-1-6 3-4 5" fill="none" stroke="#aaa" stroke-width="1.800"/></svg></div>
    <div class="tk"><svg width="22" height="22" viewBox="0 0 22 22"><path d="M3 12C3 5 7 1 12 1c6 0 9 5 9 10H8c0 4 6 6 11 3v5c-7 3-16 1-16-7z" fill="#0a6fd8"/></svg></div>
    <div class="tk"><svg width="26" height="26" viewBox="0 0 26 26"><ellipse cx="13" cy="13" rx="13" ry="6" fill="none" stroke="#f0c830" stroke-width="1.600" transform="rotate(-40 13 13)"/><circle cx="13" cy="14" r="8.500" fill="none" stroke="#3aa0e8" stroke-width="3.600"/><path d="M5 14h17" stroke="#3aa0e8" stroke-width="3"/></svg></div>
    <div class="tk"><svg width="22" height="20" viewBox="0 0 22 20"><path d="M1 2h7l2 2h11v15H1z" fill="#f8dc7a"/><path d="M1 7h20v3H1z" fill="#fff2b8"/><path d="M6 11h10v8h-3v-4H9v4H6z" fill="#2f96d8"/></svg></div>
    <div class="tk run"><svg width="26" height="28" viewBox="0 0 26 28"><circle cx="13" cy="14" r="11" fill="#8ac83a" stroke="#d8ecd0" stroke-width="1.500"/><circle cx="13" cy="14" r="6" fill="none" stroke="#fff" stroke-width="2.500"/><path d="M7 14h12" stroke="#fff" stroke-width="2"/><path d="M6 26C14 22 22 12 23 1" fill="none" stroke="#4aa030"/></svg></div>
    <div class="tk run"><svg width="24" height="28" viewBox="0 0 24 28"><path d="M19 4C9 0 2 7 3 16c1 8 9 11 14 8 5-4 3-10-2-10-3 0-5 2-4 5" fill="none" stroke="#1f8fe8" stroke-width="5"/></svg></div>
    <div class="tk run act"><svg width="24" height="28" viewBox="0 0 24 28"><rect width="24" height="28" rx="4" fill="#0f96f0"/><path d="M12 5v15M5 11v4c0 3 3 4 7 4s7-1 7-4v-4M9 8h6" fill="none" stroke="#fff" stroke-width="2.200"/></svg></div>
    <div class="tray">
      <span class="tr-link">链接</span>
      <span class="tr-cpu"><span>8%</span><span>CPU使用</span></span>
      <span class="tr-ic i-up"><svg width="12" height="7" viewBox="0 0 12 7"><path d="M1 6.500l5-5 5 5" fill="none" stroke="#ddd" stroke-width="1.200"/></svg></span>
      <span class="tr-ic i-26"><svg width="16" height="11" viewBox="0 0 16 11"><rect x="4" y="2.500" width="11" height="7" fill="none" stroke="#ddd"/><rect x="6" y="4" width="7" height="4" fill="#ddd"/><path d="M0 5h4M2 1v3" stroke="#fff" stroke-width="1.400"/></svg></span>
      <span class="tr-ic i-23"><svg width="16" height="14" viewBox="0 0 16 14"><rect x="3.500" y=".5" width="12" height="9" fill="none" stroke="#ddd"/><rect x=".5" y="2.500" width="4" height="3" fill="#06181a" stroke="#ddd"/><path d="M6 13h8M10 10v3" stroke="#ddd"/></svg></span>
      <span class="tr-ic i-25"><svg width="16" height="13" viewBox="0 0 16 13"><path d="M1 4.500h3l4-3v10l-4-3H1z" fill="none" stroke="#ddd"/><path d="M10 4c1 2 1 3 0 5M12 2c2 3 2 6 0 9" fill="none" stroke="#ddd"/></svg></span>
      <span class="tr-ic i-30"><svg width="23" height="13" viewBox="0 0 23 13"><rect x=".5" y=".5" width="22" height="12" fill="none" stroke="#ddd"/><path d="M3 4h17M3 6.500h17" stroke="#ddd" stroke-dasharray="1.500 1"/><path d="M6 9.500h11" stroke="#ddd"/></svg></span>
      <span class="tr-ic i-27 tr-zh">中</span>
      <span class="tr-ic i-30"><svg width="16" height="17" viewBox="0 0 16 17"><path d="M2 1l14 2-2 13-13-2z" fill="#f0501e"/><path d="M12 5H5v3h6v3.500H4" fill="none" stroke="#fff" stroke-width="2"/></svg></span>
      <span class="tr-clock"><span>15:49</span><span>2018/5/22</span></span>
      <span class="tr-note"><svg width="14" height="14" viewBox="0 0 14 14"><path d="M0 0h14v11H5l-2 3v-3H0z" fill="#fff"/><path d="M2 3h9M2 5.500h9M2 8h6" stroke="#333"/></svg><b class="badge">1</b></span>
    </div>
  </div>
</div>
</body>
</html>
```

FILE: styles.css
```css
* { box-sizing: border-box; }
html, body { margin: 0; height: 100%; }
body {
  width: 1366px; height: 768px; overflow: hidden; background: #020e12;
  font: 12px/16px "Liberation Sans", "Noto Sans CJK SC", sans-serif; color: #1a1a1a;
}
.defs { position: absolute; }
.lat { font-family: "Liberation Mono", "Noto Sans CJK SC", monospace; letter-spacing: -1.2px; }
.app { position: relative; width: 1366px; height: 768px; display: flex; flex-direction: column; overflow: hidden; }

.titlebar { height: 24px; flex: none; background: #fff; display: flex; align-items: center; padding: 0 0 2px 4px; }
.appicon { margin-right: 6px; flex: none; }
.apptitle { color: #8c8c8c; font-size: 12px; letter-spacing: .4px; white-space: nowrap; }
.winbtns { margin-left: auto; display: flex; gap: 34px; padding-right: 20px; }

.tool { display: inline-flex; align-items: center; gap: 4px; white-space: nowrap; flex: none; }
.tool svg { flex: none; }
.off { color: #a3a3a3; }
.sep { width: 1px; height: 20px; background: #c4c4c4; flex: none; }
.more { font-weight: bold; font-size: 13px; color: #222; }
.n2 { margin-left: -2px; }
.n3 { margin-left: -3px; }

.menubar { height: 28px; flex: none; background: #f8f8f8; display: flex; align-items: center; gap: 10px; padding-left: 7px; white-space: nowrap; }
.m-change { gap: 5px; margin-left: -1px; }
.m-change .dd { margin-left: 0; }
.tip { color: #3f6a00; width: 196px; padding-left: 29px; margin-left: -3px; height: 28px; line-height: 28px; background: #f2f3f5; }
.m-user { gap: 5px; margin-left: -3px; }
.m-user .dd { margin-left: 5px; }
.m-bean { margin-left: -2px; }
.bell { margin-left: -2px; }
.menubar .more { margin-left: 27px; }

.toolbar1 { height: 26px; margin: 2px 0; flex: none; background: #f4f5f6; display: flex; align-items: center; gap: 7px; padding-left: 6px; white-space: nowrap; }
.tbicon { display: inline-flex; flex: none; }
.open { margin-left: 2px; }
.save { margin-left: 3px; }
.undo { margin-left: 2px; }
.dd-u { margin-left: 2px; }
.more-a { margin-left: 13px; margin-right: 4px; }
.t-draw { margin-right: 3px; gap: 2px; }
.t-sum { gap: 6px; }
.sigma { font: bold 14px/16px "Liberation Serif", serif; width: 10px; }
.more-b { margin-left: 31px; margin-right: 2px; }
.combo2d { width: 62px; height: 24px; border: 1px solid #777; display: inline-flex; align-items: center; gap: 3px; padding-left: 3px; flex: none; }
.box2d { width: 15px; height: 13px; background: #e4e4e4; border: 1px solid #cfcfcf; }
.combo2d .dd { margin-left: 5px; }
.dd-t { margin-left: 4px; }
.more-c { margin-left: 26px; }

.work { flex: 1; min-height: 0; display: flex; }
.nav { width: 270px; flex: none; display: flex; flex-direction: column; padding-top: 2px; background: #f0f0f0; }
.navhead { height: 15px; flex: none; border-bottom: 1px solid #8a8a8a; display: flex; justify-content: space-between; align-items: center; font-size: 13px; background: #f4f4f4; margin-bottom: 3px; }
.navctl { display: inline-flex; gap: 12px; padding-right: 5px; align-items: center; }
.navbtn { height: 22px; flex: none; margin: 0 1px; background: #efefef; border: 1px solid #a8a8a8; border-top-color: #ddd; border-left-color: #ddd; text-align: center; line-height: 20px; }
.navtools { height: 27px; flex: none; display: flex; align-items: center; gap: 4px; padding-left: 6px; background: #f7f7f7; margin: 1px 1px 0; }
.tree { flex: 1; min-height: 0; margin: 0 3px 1px 3px; border: 1px solid #8f8f8f; border-bottom-width: 2px; background: #fff; display: flex; overflow: hidden; }
.treerows { flex: 1; min-width: 0; overflow: hidden; }
.treebar { width: 16px; flex: none; background: #f0f0f0; padding: 4px 3px; }

.tr, .cr {
  --dv: repeating-linear-gradient(#808080 0 1px, transparent 1px 2px);
  --dh: repeating-linear-gradient(90deg, #808080 0 1px, transparent 1px 2px);
  height: 16px; display: flex; align-items: center; gap: 4px; white-space: nowrap; background-repeat: no-repeat;
}
.folder { padding-left: 6px; background-image: var(--dv), var(--dh); background-size: 1px 16px, 8px 1px; background-position: 11px 0, 16px 8px; }
.chev { background: #fff; margin-right: 2px; }
.kid { padding-left: 42px; background-image: var(--dv), var(--dv), var(--dh); background-size: 1px 16px, 1px 16px, 11px 1px; background-position: 11px 0, 31px 0, 31px 8px; }
.kid.last { background-size: 1px 16px, 1px 9px, 11px 1px; }
.sel { display: inline-flex; gap: 4px; align-items: center; background: #d2d2d2; padding: 0 6px 0 3px; margin-left: -3px; height: 16px; }

.content { flex: 1; min-width: 0; display: flex; flex-direction: column; background: #f7f7f7; }
.toolbar2 { height: 26px; flex: none; margin: 2px 0 0 5px; background: #f4f5f6; display: flex; align-items: center; gap: 6px; padding-left: 4px; white-space: nowrap; }
.t-new { gap: 3px; }
.t-new svg:first-child { margin-right: 1px; }
.t-del { margin-left: 2px; }
.t-copy { gap: 7px; }
.s-floor { margin-left: 2px; }
.l-floor { margin-left: -5px; }
.floorbox { width: 46px; height: 22px; line-height: 22px; background: #fff; padding-left: 2px; }
.t-cp1 { margin-left: -3px; }
.t-cp2 { margin-left: 0; }
.t-find { margin-left: 2px; }
.t-move { gap: 6px; margin-left: 2px; }
.t-move + .t-move { margin-left: 4px; }

.panes { flex: 1; min-height: 0; display: flex; padding-left: 5px; }
.comp { width: 183px; flex: none; display: flex; flex-direction: column; background: #fff; }
.searchrow { height: 32px; flex: none; display: flex; align-items: center; gap: 4px; padding: 4px 0 0 1px; }
.search { width: 157px; height: 24px; border: 1px solid #8f8f8f; border-bottom-width: 2px; padding-left: 2px; line-height: 21px; font-size: 13px; color: #8a8a8a; background: #fff; }
.comptree { flex: 1; min-height: 0; border: 1px solid #8f8f8f; padding-top: 2px; background: #fff; }
.cr { padding-left: 43px; gap: 6px; background-image: var(--dv), var(--dh); background-size: 1px 16px, 11px 1px; background-position: 32px 0, 32px 8px; }
.croot { padding-left: 6px; gap: 1px; background-image: none; }
.croot span { margin-left: 8px; }
.csel { display: inline-flex; gap: 6px; align-items: center; height: 16px; background: #316ac5; padding-right: 4px; margin-left: -1px; padding-left: 1px; width: 51px; }

.props { flex: 1; min-width: 0; display: flex; flex-direction: column; background: #fff; margin-left: 4px; }
.tabs { height: 24px; flex: none; padding-top: 3px; border-bottom: 1px solid #cfcfcf; background: #fff; }
.tab { display: inline-block; width: 63px; height: 21px; line-height: 20px; text-align: center; font-size: 13px; background: #fff; border: 1px solid #d8d8d8; border-bottom: 0; margin-left: 1px; }
.propbody { flex: 1; min-height: 0; display: flex; justify-content: space-between; padding: 4px 8px 0 4px; align-items: flex-start; }
.ptable { border-collapse: collapse; table-layout: fixed; width: 370px; }
.ptable th { height: 23px; font-weight: normal; background: #f3f3f3; border: 1px solid #cfcfcf; }
.ptable td { height: 19px; padding: 0 2px; border: 1px solid #c8c8c8; background: #fff; white-space: nowrap; overflow: visible; }
.c-n { width: 22px; }
.c-name { width: 191px; }
.c-val { width: 125px; color: #7a0a78; background: linear-gradient(#fbe0ae, #f2c06a) !important; }
.c-add { width: 32px; }
.ptable td.n { text-align: center; background: #f7f7f7; }
.ptable td.nm { padding-left: 20px; color: #0000ee; }
.ptable tr.cur td.n { background: #fdd08c; color: #7a0a78; }
.ptable tr.cur td.nm { background: #0078d7; color: #fff; }
.ptable tr.cur td:nth-child(3) { background: #d5e8f8; }
.ptable td:last-child { text-align: center; vertical-align: middle; line-height: 0; }
.cb { display: inline-block; width: 13px; height: 13px; border: 1px solid #333; background: #fff; }
.vbar { width: 15px; height: 568px; background: linear-gradient(#c8c8c8 0 66%, #f0f0f0 66%); display: flex; flex-direction: column; justify-content: space-between; align-items: center; padding: 2px 0 4px; }

.status { height: 22px; flex: none; background: #f0f0f0; display: flex; gap: 3px; padding: 2px 0 0 0; }
.st { height: 20px; background: #f7f7f7; border: 1px solid #dcdcdc; line-height: 18px; padding-left: 2px; }
.st-a { width: 147px; }
.st-b { width: 73px; }
.st-c { flex: 1; }
.st-d { width: 70px; }

.paramwin { position: absolute; left: 945px; top: 203px; width: 399px; height: 499px; border: 1px solid #555; background: linear-gradient(#bccbdc, #d6e3f1 32px); padding: 8px 7px 7px; z-index: 1; }
.paramtitle { height: 22px; line-height: 20px; color: #9a9a9a; }
.paramsvg { display: block; background: #000; }
.w { fill: none; stroke: #fff; stroke-width: 1; shape-rendering: crispEdges; }
.hatch { fill: none; stroke: #fff; stroke-width: 1; }
.red { fill: none; stroke: #f00; stroke-width: 2; }
.redb { fill: none; stroke: #f00; stroke-width: 3; }
.dots { stroke: #ff0; stroke-width: 2; fill: none; }
.cy { stroke: #0ff; stroke-width: 2; fill: none; }
.txt { font: 13px "Liberation Mono", monospace; text-anchor: middle; }
.cyt { fill: #0ff; font-size: 15px; }
.wt { fill: #fff; }
.gr { fill: #0f0; font-size: 14px; }
.cjk { fill: #fff; font: 16px "Noto Sans CJK SC", sans-serif; text-anchor: middle; }

.dialog { position: absolute; left: 220px; top: 254px; width: 507px; height: 514px; border: 1px solid #2a8ae0; background: #f0f0f0; box-shadow: 0 0 14px rgba(0, 0, 0, .35); z-index: 2; }
.dlgtitle { height: 25px; background: #fff; display: flex; align-items: center; justify-content: space-between; padding: 0 9px 0 3px; color: #222; }
.dlgbody { padding: 15px 15px 0 9px; }
.group { border: 1px solid #d4d4d4; border-bottom: 0; height: 480px; padding: 10px 0 0 4px; }
.legend { display: block; width: 30px; height: 14px; line-height: 14px; margin: -18px 0 4px -1px; padding-left: 3px; background: #f0f0f0; }
.tiles { display: grid; grid-template-columns: repeat(3, 154px); grid-auto-rows: 158px; gap: 4px; }
.tile { background: #f0f0f0; border: 2px solid; border-color: #fff #a0a0a0 #a0a0a0 #fff; padding: 7px 0 0 5px; }
.tile.on { background: #0ff; border-color: #0ff; }
.pic { display: block; background: #008080; fill: none; stroke: #fff; stroke-width: 1; shape-rendering: crispEdges; }
.pic circle { shape-rendering: auto; }
.pic text { fill: #fff; stroke: none; font: 14px "Noto Sans CJK SC", sans-serif; text-anchor: middle; dominant-baseline: central; shape-rendering: auto; }

.ime { position: absolute; left: 840px; top: 1px; display: flex; align-items: flex-start; z-index: 3; }
.imelogo { display: block; }
.imebar { width: 178px; height: 23px; margin-top: 2px; border: 1px solid #a8c8e8; background: #fff; display: flex; align-items: center; gap: 7px; padding-left: 5px; }
.imetxt { color: #1e6fc0; font-weight: bold; font-size: 14px; }
.imep { width: 16px; letter-spacing: 1px; }
.ball { position: absolute; left: 1091px; top: -28px; width: 46px; height: 46px; border-radius: 50%; background: #3dbb52; border: 2px solid #cfd8d0; box-shadow: 0 1px 4px rgba(0, 0, 0, .5); color: #fff; font-weight: bold; text-align: center; padding-top: 27px; line-height: 14px; z-index: 3; }

.taskbar { position: relative; z-index: 5; height: 40px; flex: none; display: flex; background: rgba(0, 10, 12, .9); color: #ddd; }
.start { width: 48px; background: #000; display: flex; align-items: center; justify-content: center; padding: 0 2px 0 0; }
.tsearch { width: 344px; background: #333; display: flex; align-items: center; padding-left: 10px; }
.tstext { margin-left: 6px; font-size: 14px; color: #9a9a9a; }
.tmic { margin-left: auto; margin-right: 15px; }
.tk { width: 50px; display: flex; align-items: center; justify-content: center; }
.tk.run { background: linear-gradient(#64b1f2, #64b1f2) bottom center / 40px 2px no-repeat; }
.tk.act { background: linear-gradient(#64b1f2, #64b1f2) bottom center / 48px 2px no-repeat, linear-gradient(90deg, transparent 1px, #34424a 1px, #34424a 49px, transparent 49px); }
.tray { margin-left: auto; display: flex; align-items: center; height: 40px; }
.tr-link { width: 62px; text-align: center; color: #ccc; }
.tr-cpu { width: 48px; margin-right: 14px; display: flex; flex-direction: column; align-items: center; line-height: 18px; color: #ddd; white-space: nowrap; }
.tr-ic { display: flex; align-items: center; justify-content: center; }
.i-up { width: 22px; }
.i-26 { width: 26px; }
.i-23 { width: 23px; }
.i-25 { width: 25px; }
.i-30 { width: 30px; }
.i-27 { width: 27px; }
.tr-zh { font-size: 13px; color: #eee; }
.tr-clock { width: 80px; display: flex; flex-direction: column; align-items: center; line-height: 18px; color: #eee; font-size: 12px; }
.tr-note { width: 49px; display: flex; padding-left: 10px; align-items: center; }
.badge { width: 14px; height: 14px; border-radius: 50%; background: #333; color: #fff; font-size: 10px; line-height: 14px; text-align: center; margin: 7px 0 0 -4px; }
```
